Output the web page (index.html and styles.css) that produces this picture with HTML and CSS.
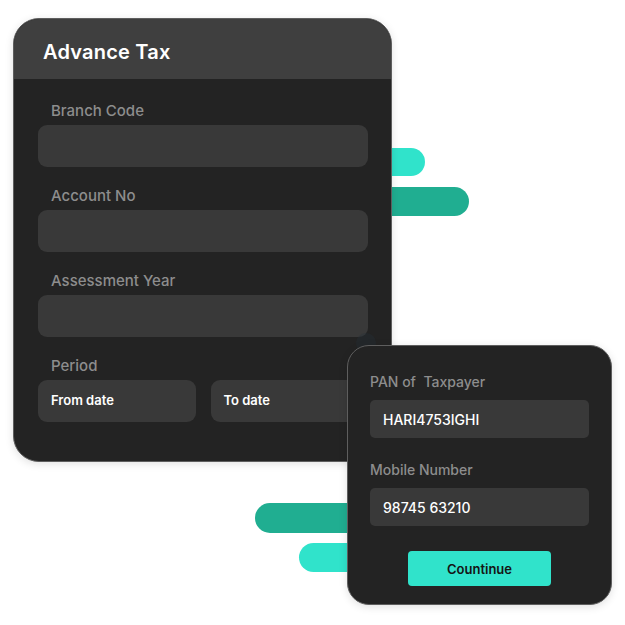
FILE: index.html
```html
<!DOCTYPE html>
<html lang="en">
<head>
<meta charset="utf-8">
<title>Advance Tax</title>
<link rel="stylesheet" href="styles.css">
</head>
<body>
<div class="stage">
  <div class="bar bar-a"></div>
  <div class="bar bar-b"></div>
  <div class="bar bar-c"></div>
  <div class="bar bar-d"></div>

  <section class="card main-card">
    <header class="card-head">Advance Tax</header>
    <div class="card-body">
      <div class="field">
        <div class="label">Branch Code</div>
        <div class="input"></div>
      </div>
      <div class="field">
        <div class="label">Account No</div>
        <div class="input"></div>
      </div>
      <div class="field">
        <div class="label">Assessment Year</div>
        <div class="input"></div>
      </div>
      <div class="field">
        <div class="label">Period</div>
        <div class="dates">
          <div class="input date">From date</div>
          <div class="input date">To date</div>
        </div>
      </div>
    </div>
  </section>

  <div class="dot"></div>

  <section class="card pan-card">
    <div class="pan-field">
      <div class="pan-label">PAN of&nbsp; Taxpayer</div>
      <div class="pan-input">HARI4753IGHI</div>
    </div>
    <div class="pan-field">
      <div class="pan-label">Mobile Number</div>
      <div class="pan-input">98745 63210</div>
    </div>
    <button class="btn">Countinue</button>
  </section>
</div>
</body>
</html>
```

FILE: styles.css
```css
* { box-sizing: border-box; }
html, body {
  margin: 0;
  padding: 0;
  background: #ffffff;
  font-family: "Inter", "Noto Sans", "Liberation Sans", sans-serif;
}
.stage {
  position: relative;
  width: 625px;
  height: 625px;
  overflow: hidden;
}
.bar {
  position: absolute;
  border-radius: 15px;
}
.bar-a { left: 360px; top: 148px; width: 65px; height: 28px; background: #30e3cb; border-radius: 14px; }
.bar-b { left: 360px; top: 187px; width: 109px; height: 29px; background: #20ae91; }
.bar-c { left: 255px; top: 503px; width: 120px; height: 30px; background: #20ae91; }
.bar-d { left: 299px; top: 543px; width: 80px; height: 29px; background: #30e3cb; }

.card {
  position: absolute;
  background: #232323;
  border: 1px solid #5e5e5e;
  box-shadow: 0 2px 8px rgba(0, 0, 0, 0.12);
  overflow: hidden;
}
.main-card {
  left: 13px;
  top: 18px;
  width: 379px;
  height: 444px;
  border-radius: 26px;
}
.card-head {
  height: 60px;
  background: #3f3f3f;
  color: #ffffff;
  font-size: 20px;
  font-weight: 600;
  letter-spacing: 0.2px;
  display: flex;
  align-items: center;
  padding-left: 29px;
  padding-top: 6px;
}
.card-body {
  padding: 22px 23px 0 24px;
  display: flex;
  flex-direction: column;
  gap: 19px;
}
.field {
  display: flex;
  flex-direction: column;
  gap: 4px;
}
.label {
  color: #8d8d8d;
  font-size: 15px;
  line-height: 20px;
  padding-left: 13px;
  font-weight: 500;
}
.input {
  height: 42px;
  background: #393939;
  border-radius: 9px;
}
.dates {
  display: grid;
  grid-template-columns: 1fr 1fr;
  gap: 15px;
}
.date {
  color: #ffffff;
  font-size: 13px;
  font-weight: 600;
  display: flex;
  align-items: center;
  padding-left: 13px;
  padding-bottom: 2px;
}

.dot {
  position: absolute;
  left: 356px;
  top: 333px;
  width: 20px;
  height: 20px;
  border-radius: 50%;
  background: #26323a;
  opacity: 0.35;
}

.pan-card {
  left: 347px;
  top: 345px;
  width: 265px;
  height: 260px;
  border-radius: 22px;
  padding: 26px 22px 0 22px;
  display: flex;
  flex-direction: column;
  gap: 22px;
}
.pan-field {
  display: flex;
  flex-direction: column;
  gap: 8px;
}
.pan-label {
  color: #8d8d8d;
  font-size: 14px;
  line-height: 20px;
  font-weight: 500;
}
.pan-input {
  height: 38px;
  background: #393939;
  border-radius: 5px;
  color: #ffffff;
  font-size: 14px;
  font-weight: 500;
  display: flex;
  align-items: center;
  padding-left: 13px;
}
.btn {
  align-self: center;
  margin-top: 3px;
  width: 143px;
  height: 35px;
  border: none;
  border-radius: 4px;
  background: #30e3cb;
  color: #151515;
  font-family: inherit;
  font-size: 13px;
  font-weight: 600;
  padding: 0;
}
```
